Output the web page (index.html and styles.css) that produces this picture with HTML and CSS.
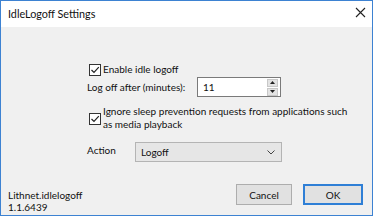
FILE: index.html
```html
<!DOCTYPE html>
<html>
<head>
<meta charset="utf-8">
<link rel="stylesheet" href="styles.css">
</head>
<body>
<div class="window">
  <div class="titlebar">
    <span class="title">IdleLogoff Settings</span>
    <svg class="close" width="11" height="11" viewBox="0 0 11 11"><path d="M1 1 L10 10 M10 1 L1 10" stroke="#222" stroke-width="1.1" fill="none"/></svg>
  </div>
  <div class="content">
    <div class="form">
      <div class="check-row first">
        <span class="box"><svg width="10" height="10" viewBox="0 0 10 10"><path d="M1.5 5 L4 7.5 L8.8 2.2" stroke="#222" stroke-width="1.2" fill="none"/></svg></span>
        <span class="label">Enable idle logoff</span>
      </div>
      <div class="spin-row">
        <span class="field-label">Log off after (minutes):</span>
        <div class="spin">
          <span class="spin-value">11</span>
          <div class="spin-buttons">
            <span class="spin-btn"><svg width="5" height="3" viewBox="0 0 5 3"><path d="M0 3 L2.5 0 L5 3 Z" fill="#222"/></svg></span>
            <span class="spin-btn"><svg width="5" height="3" viewBox="0 0 5 3"><path d="M0 0 L2.5 3 L5 0 Z" fill="#222"/></svg></span>
          </div>
        </div>
      </div>
      <div class="check-row multi">
        <span class="box"><svg width="10" height="10" viewBox="0 0 10 10"><path d="M1.5 5 L4 7.5 L8.8 2.2" stroke="#222" stroke-width="1.2" fill="none"/></svg></span>
        <span class="label">Ignore sleep prevention requests from applications such<br>as media playback</span>
      </div>
      <div class="action-row">
        <span class="action-label">Action</span>
        <div class="select">
          <span class="select-value">Logoff</span>
          <svg class="chevron" width="8" height="5" viewBox="0 0 8 5"><path d="M0.5 0.5 L4 4 L7.5 0.5" stroke="#444" stroke-width="1" fill="none"/></svg>
        </div>
      </div>
    </div>
    <div class="footer">
      <div class="version">Lithnet.idlelogoff<br>1.1.6439</div>
      <div class="buttons">
        <span class="btn cancel">Cancel</span>
        <span class="btn ok">OK</span>
      </div>
    </div>
  </div>
</div>
</body>
</html>
```
FILE: styles.css
```css
html, body {
  margin: 0;
  padding: 0;
  background: #ffffff;
}
body {
  font-family: Lato, "Noto Sans", sans-serif;
  font-size: 10px;
  color: #111;
  white-space: nowrap;
}
.window {
  width: 373px;
  height: 216px;
  box-sizing: border-box;
  border: 1px solid #3d82d2;
  display: flex;
  flex-direction: column;
  background: #f0f0f0;
}
.titlebar {
  height: 26px;
  background: #ffffff;
  display: flex;
  align-items: center;
  justify-content: space-between;
  padding: 0 6px 0 7px;
  flex: none;
}
.title {
  font-size: 10.8px;
  color: #111;
  margin-top: -1px;
}
.close {
  margin-top: -3px;
}
.content {
  flex: 1;
  display: flex;
  flex-direction: column;
}
.form {
  margin-left: 86px;
  padding-top: 35px;
}
.check-row {
  display: flex;
  align-items: center;
}
.check-row.first {
  height: 15px;
}
.box {
  width: 12px;
  height: 12px;
  box-sizing: border-box;
  border: 1px solid #333;
  background: #fff;
  margin-left: 2px;
  margin-right: 2px;
  display: flex;
  align-items: center;
  justify-content: center;
  flex: none;
}
.label {
  line-height: 13px;
}
.spin-row {
  display: flex;
  align-items: center;
  height: 20px;
}
.field-label {
  width: 110px;
  flex: none;
}
.spin {
  width: 84px;
  height: 20px;
  box-sizing: border-box;
  border: 1px solid #7a7a7a;
  background: #fff;
  display: flex;
  align-items: center;
  justify-content: space-between;
  padding: 0 2px 0 5px;
  flex: none;
}
.spin-buttons {
  display: flex;
  flex-direction: column;
  gap: 1px;
}
.spin-btn {
  width: 11px;
  height: 8px;
  background: #e3e3e3;
  border: 1px solid #c8c8c8;
  box-sizing: border-box;
  display: flex;
  align-items: center;
  justify-content: center;
}
.check-row.multi {
  margin-top: 8px;
  height: 26px;
}
.check-row.multi .box {
  margin-top: 2px;
}
.action-row {
  display: flex;
  align-items: center;
  margin-top: 11px;
  height: 20px;
}
.action-label {
  width: 48px;
  margin-top: -5px;
  flex: none;
}
.select {
  width: 147px;
  height: 20px;
  box-sizing: border-box;
  border: 1px solid #b4b4b4;
  background: #e6e6e6;
  display: flex;
  align-items: center;
  justify-content: space-between;
  padding: 0 6px 0 5px;
  flex: none;
}
.footer {
  margin-top: auto;
  height: 31px;
  display: flex;
  justify-content: space-between;
  padding: 0 9px 0 7px;
}
.version {
  margin-top: 6px;
  line-height: 11.5px;
}
.buttons {
  display: flex;
  gap: 11px;
}
.btn {
  height: 21px;
  box-sizing: border-box;
  background: #e1e1e1;
  border: 1px solid #adadad;
  display: flex;
  align-items: center;
  justify-content: center;
}
.cancel {
  width: 56px;
}
.ok {
  width: 60px;
  border: 2px solid #2f7fd6;
}
```
